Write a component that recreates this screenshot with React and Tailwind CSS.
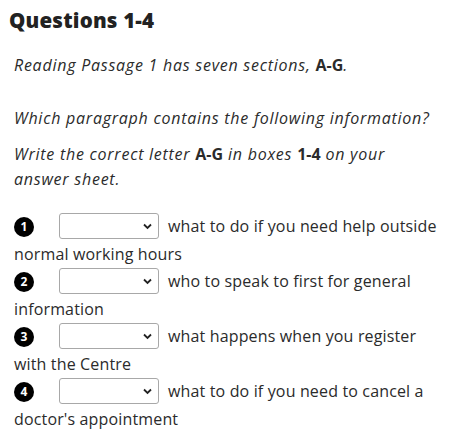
import React from 'react';

const questions = [
    { n: 1, text: 'what to do if you need help outside normal working hours' },
    { n: 2, text: 'who to speak to first for general information' },
    { n: 3, text: 'what happens when you register with the Centre' },
    { n: 4, text: "what to do if you need to cancel a doctor's appointment" },
];

function Dropdown() {
    return (
        <span className="relative inline-block align-top w-[100px] h-[26px] ml-[25px] mr-[9px] border border-[#a8a8a8] rounded-[3px] bg-white">
            <svg className="absolute right-[6px] top-[9px]" width="9" height="7" viewBox="0 0 9 7" fill="none">
                <path d="M1 1.5l3.5 3.5 3.5-3.5" stroke="#222" strokeWidth="1.8" />
            </svg>
        </span>
    );
}

export default function App() {
    return (
        <div className="w-[450px] h-[446px] bg-white text-[#2b2b2b] font-['Open_Sans',sans-serif] text-[16px] overflow-hidden">
            <h2 className="pl-[9px] pt-[6px] text-[20.5px] leading-[28px] font-extrabold tracking-[0.2px] text-[#222]">Questions 1-4</h2>
            <div className="pl-[14px] pr-[10px] italic tracking-[0.75px]">
                <p className="mt-[18px] leading-[26px]">
                    Reading Passage 1 has seven sections, <b className="not-italic font-bold tracking-normal">A-G</b>.
                </p>
                <p className="mt-[27px] leading-[26px]">Which paragraph contains the following information?</p>
                <p className="mt-[11px] leading-[25px] max-w-[390px]">
                    Write the correct letter <b className="not-italic font-bold tracking-normal">A-G</b> in boxes <b className="not-italic font-bold tracking-normal">1-4</b> on your answer sheet.
                </p>
            </div>
            <div className="pl-[14px] pr-[6px] mt-[21px] tracking-[0.15px]">
                {questions.map((q) => (
                    <div key={q.n} className="leading-[27.5px]">
                        <span className="inline-flex align-top mt-[4px] items-center justify-center w-[20px] h-[20px] rounded-full bg-black text-white text-[12px] font-bold leading-none tracking-normal">
                            {q.n}
                        </span>
                        <Dropdown />
                        {q.text}
                    </div>
                ))}
            </div>
        </div>
    );
}
